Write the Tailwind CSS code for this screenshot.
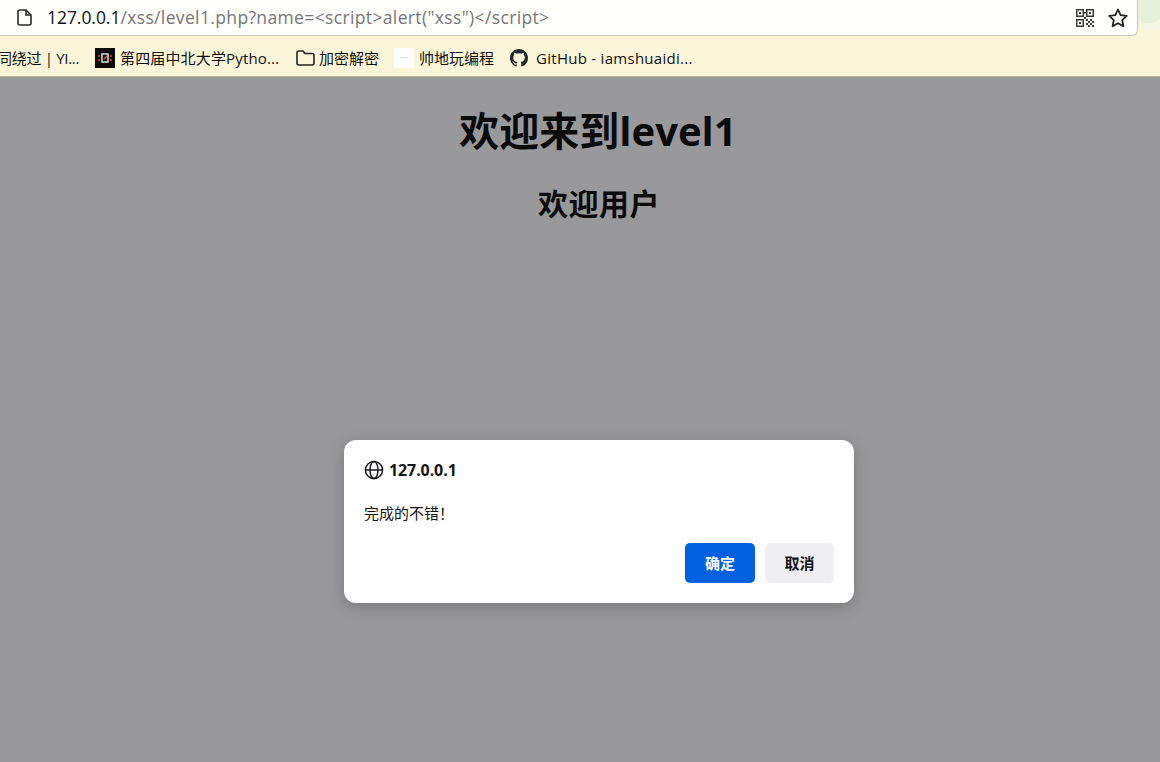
<!DOCTYPE html>
<html lang="zh-CN">
<head>
    <meta charset="UTF-8">
    <title>127.0.0.1/xss/level1.php</title>
    <script src="https://cdn.jsdelivr.net/npm/@tailwindcss/browser@4"></script>
</head>
<body class="relative h-[762px] w-[1160px] overflow-hidden bg-[#99999b] font-['Open_Sans','Noto_Sans_CJK_SC',sans-serif]">
    <!-- Browser chrome -->
    <div class="relative h-[77px] overflow-hidden border-b border-[#b9b59c] bg-[#faf5d8]">
        <!-- Theme swirl behind the bar's corner -->
        <div class="absolute top-[-22px] right-[-14px] h-[52px] w-[52px] rounded-full border-[7px] border-[#f2f6e4] bg-[#e6f0da]"></div>
        <!-- Address bar -->
        <div class="relative flex h-[36px] w-[1138px] items-center rounded-br-[6px] border-r border-b border-[#c9c7b8] bg-[#fffffb] pr-[9px] pl-[17px]">
            <svg class="h-[17px] w-[15px]" viewBox="0 0 15 17" fill="none" stroke="#2a2a2a" stroke-width="1.6"><path d="M3 1h6l5 5v8a2 2 0 0 1-2 2H3a2 2 0 0 1-2-2V3a2 2 0 0 1 2-2z" stroke-linejoin="round"/><path d="M9 1v5h5"/></svg>
            <div class="ml-[15px] text-[17.5px] leading-none tracking-[0.36px] whitespace-nowrap text-[#75757a]"><span class="tracking-[-0.05px] text-[#111]">127.0.0.1</span>/xss/level1.php?name=&lt;script&gt;alert("xss")&lt;/script&gt;</div>
            <svg class="mr-[14px] ml-auto h-[18px] w-[18px]" viewBox="0 0 18 18" fill="#3a3a3a">
                <path fill-rule="evenodd" d="M0 0h8v8H0zM1.500 1.500v5h5v-5zM10 0h8v8h-8zM11.500 1.500v5h5v-5zM0 10h8v8H0zM1.500 11.500v5h5v-5z"/>
                <path d="M3 3h2v2H3zM13 3h2v2h-2zM3 13h2v2H3zM8 3h2v1.500H8zM10 10h2v2h-2zM14 10h2v2h-2zM12 12h2v2h-2zM16 12h2v2h-2zM10 14h2v2h-2zM14 14h2v2h-2zM12 16h2v2h-2zM16 16h2v2h-2zM8 8h2v2H8z"/>
            </svg>
            <svg class="h-[20px] w-[20px]" viewBox="0 0 20 20" fill="none" stroke="#222" stroke-width="1.8" stroke-linejoin="round"><path d="M10 1.500l2.600 5.700 6.100.7-4.500 4.200 1.200 6.100L10 15.200l-5.400 3 1.200-6.100L1.300 7.900l6.100-.7z"/></svg>
        </div>
        <!-- Bookmarks -->
        <div class="relative flex h-[40px] items-center pt-[4px] text-[15px] whitespace-nowrap text-[#111]">
            <span class="ml-[-3px] w-[98px] tracking-[-0.3px]">同绕过 | YI...</span>
            <span class="flex h-[20px] w-[20px] items-center justify-center bg-[#0c0a0a]">
                <svg class="h-[14px] w-[14px]" viewBox="0 0 14 14" fill="none"><path d="M4 3h6v8H4z" stroke="#ddd" stroke-width="1.500"/><path d="M0 5h2M0 9h2M12 5h2M12 9h2" stroke="#c8452f" stroke-width="1.500"/><path d="M6 8l3-3" stroke="#d9663f" stroke-width="1.500"/></svg>
            </span>
            <span class="ml-[5px] w-[176px] tracking-[0.15px]">第四届中北大学Pytho...</span>
            <svg class="h-[16px] w-[19px]" viewBox="0 0 19 16" fill="none" stroke="#222" stroke-width="1.600" stroke-linejoin="round"><path d="M3 1h4l2 2.500h7a2 2 0 0 1 2 2V13a2 2 0 0 1-2 2H3a2 2 0 0 1-2-2V3a2 2 0 0 1 2-2z"/></svg>
            <span class="ml-[4px] w-[75px]">加密解密</span>
            <span class="flex h-[20px] w-[20px] items-center justify-center bg-white text-[3px] leading-none text-[#999]">▪▪▪</span>
            <span class="ml-[5px] w-[91px]">帅地玩编程</span>
            <svg class="h-[18px] w-[18px]" viewBox="0 0 16 16" fill="#24292f"><path d="M8 0C3.580 0 0 3.580 0 8c0 3.540 2.290 6.530 5.470 7.590.4.070.55-.17.55-.38 0-.19-.01-.82-.01-1.490-2.010.37-2.530-.49-2.690-.94-.09-.23-.48-.94-.82-1.130-.28-.15-.68-.52-.01-.53.63-.01 1.080.58 1.230.82.72 1.210 1.870.87 2.330.66.070-.52.280-.87.510-1.070-1.780-.2-3.640-.89-3.640-3.950 0-.87.310-1.590.820-2.150-.08-.2-.36-1.020.08-2.120 0 0 .67-.21 2.200.82a7.500 7.500 0 0 1 4 0c1.530-1.040 2.200-.82 2.200-.82.44 1.100.16 1.920.08 2.120.51.56.82 1.270.82 2.150 0 3.070-1.870 3.750-3.650 3.950.29.250.54.730.54 1.480 0 1.070-.01 1.930-.01 2.200 0 .21.150.460.550.380A8.010 8.010 0 0 0 16 8c0-4.420-3.580-8-8-8z"/></svg>
            <span class="ml-[8px] tracking-[0.28px]">GitHub - iamshuaidi...</span>
        </div>
    </div>

    <!-- Page content -->
    <div class="w-[1196px] pt-[27px] text-center text-[#0b0b0c]">
        <h1 class="text-[40px] leading-[54px] font-bold">欢迎来到level1</h1>
        <h2 class="mt-[26px] pl-[2px] text-[30px] leading-[40px] font-bold tracking-[0.5px]">欢迎用户</h2>
    </div>

    <!-- Alert dialog -->
    <div class="absolute top-[440px] left-[344px] flex h-[163px] w-[510px] flex-col rounded-[12px] bg-white px-[20px] pt-[20px] shadow-[0_4px_16px_rgba(0,0,0,0.22)]">
        <div class="flex h-[20px] items-center">
            <svg class="h-[20px] w-[20px]" viewBox="0 0 20 20" fill="none" stroke="#1a1a1c" stroke-width="1.500"><circle cx="10" cy="10" r="8.600"/><ellipse cx="10" cy="10" rx="4" ry="8.600"/><path d="M1.400 10h17.200"/></svg>
            <span class="ml-[5px] text-[16px] leading-none font-bold tracking-[-0.1px] text-[#151517]">127.0.0.1</span>
        </div>
        <p class="mt-[23px] text-[15px] leading-[20px] text-[#151517]">完成的不错！</p>
        <div class="mt-[20px] flex justify-end gap-[10px]">
            <button class="h-[40px] w-[70px] rounded-[5px] bg-[#0061e0] text-[15px] font-bold text-white">确定</button>
            <button class="h-[40px] w-[69px] rounded-[5px] bg-[#efeff2] text-[15px] font-bold text-[#151517]">取消</button>
        </div>
    </div>
</body>
</html>
